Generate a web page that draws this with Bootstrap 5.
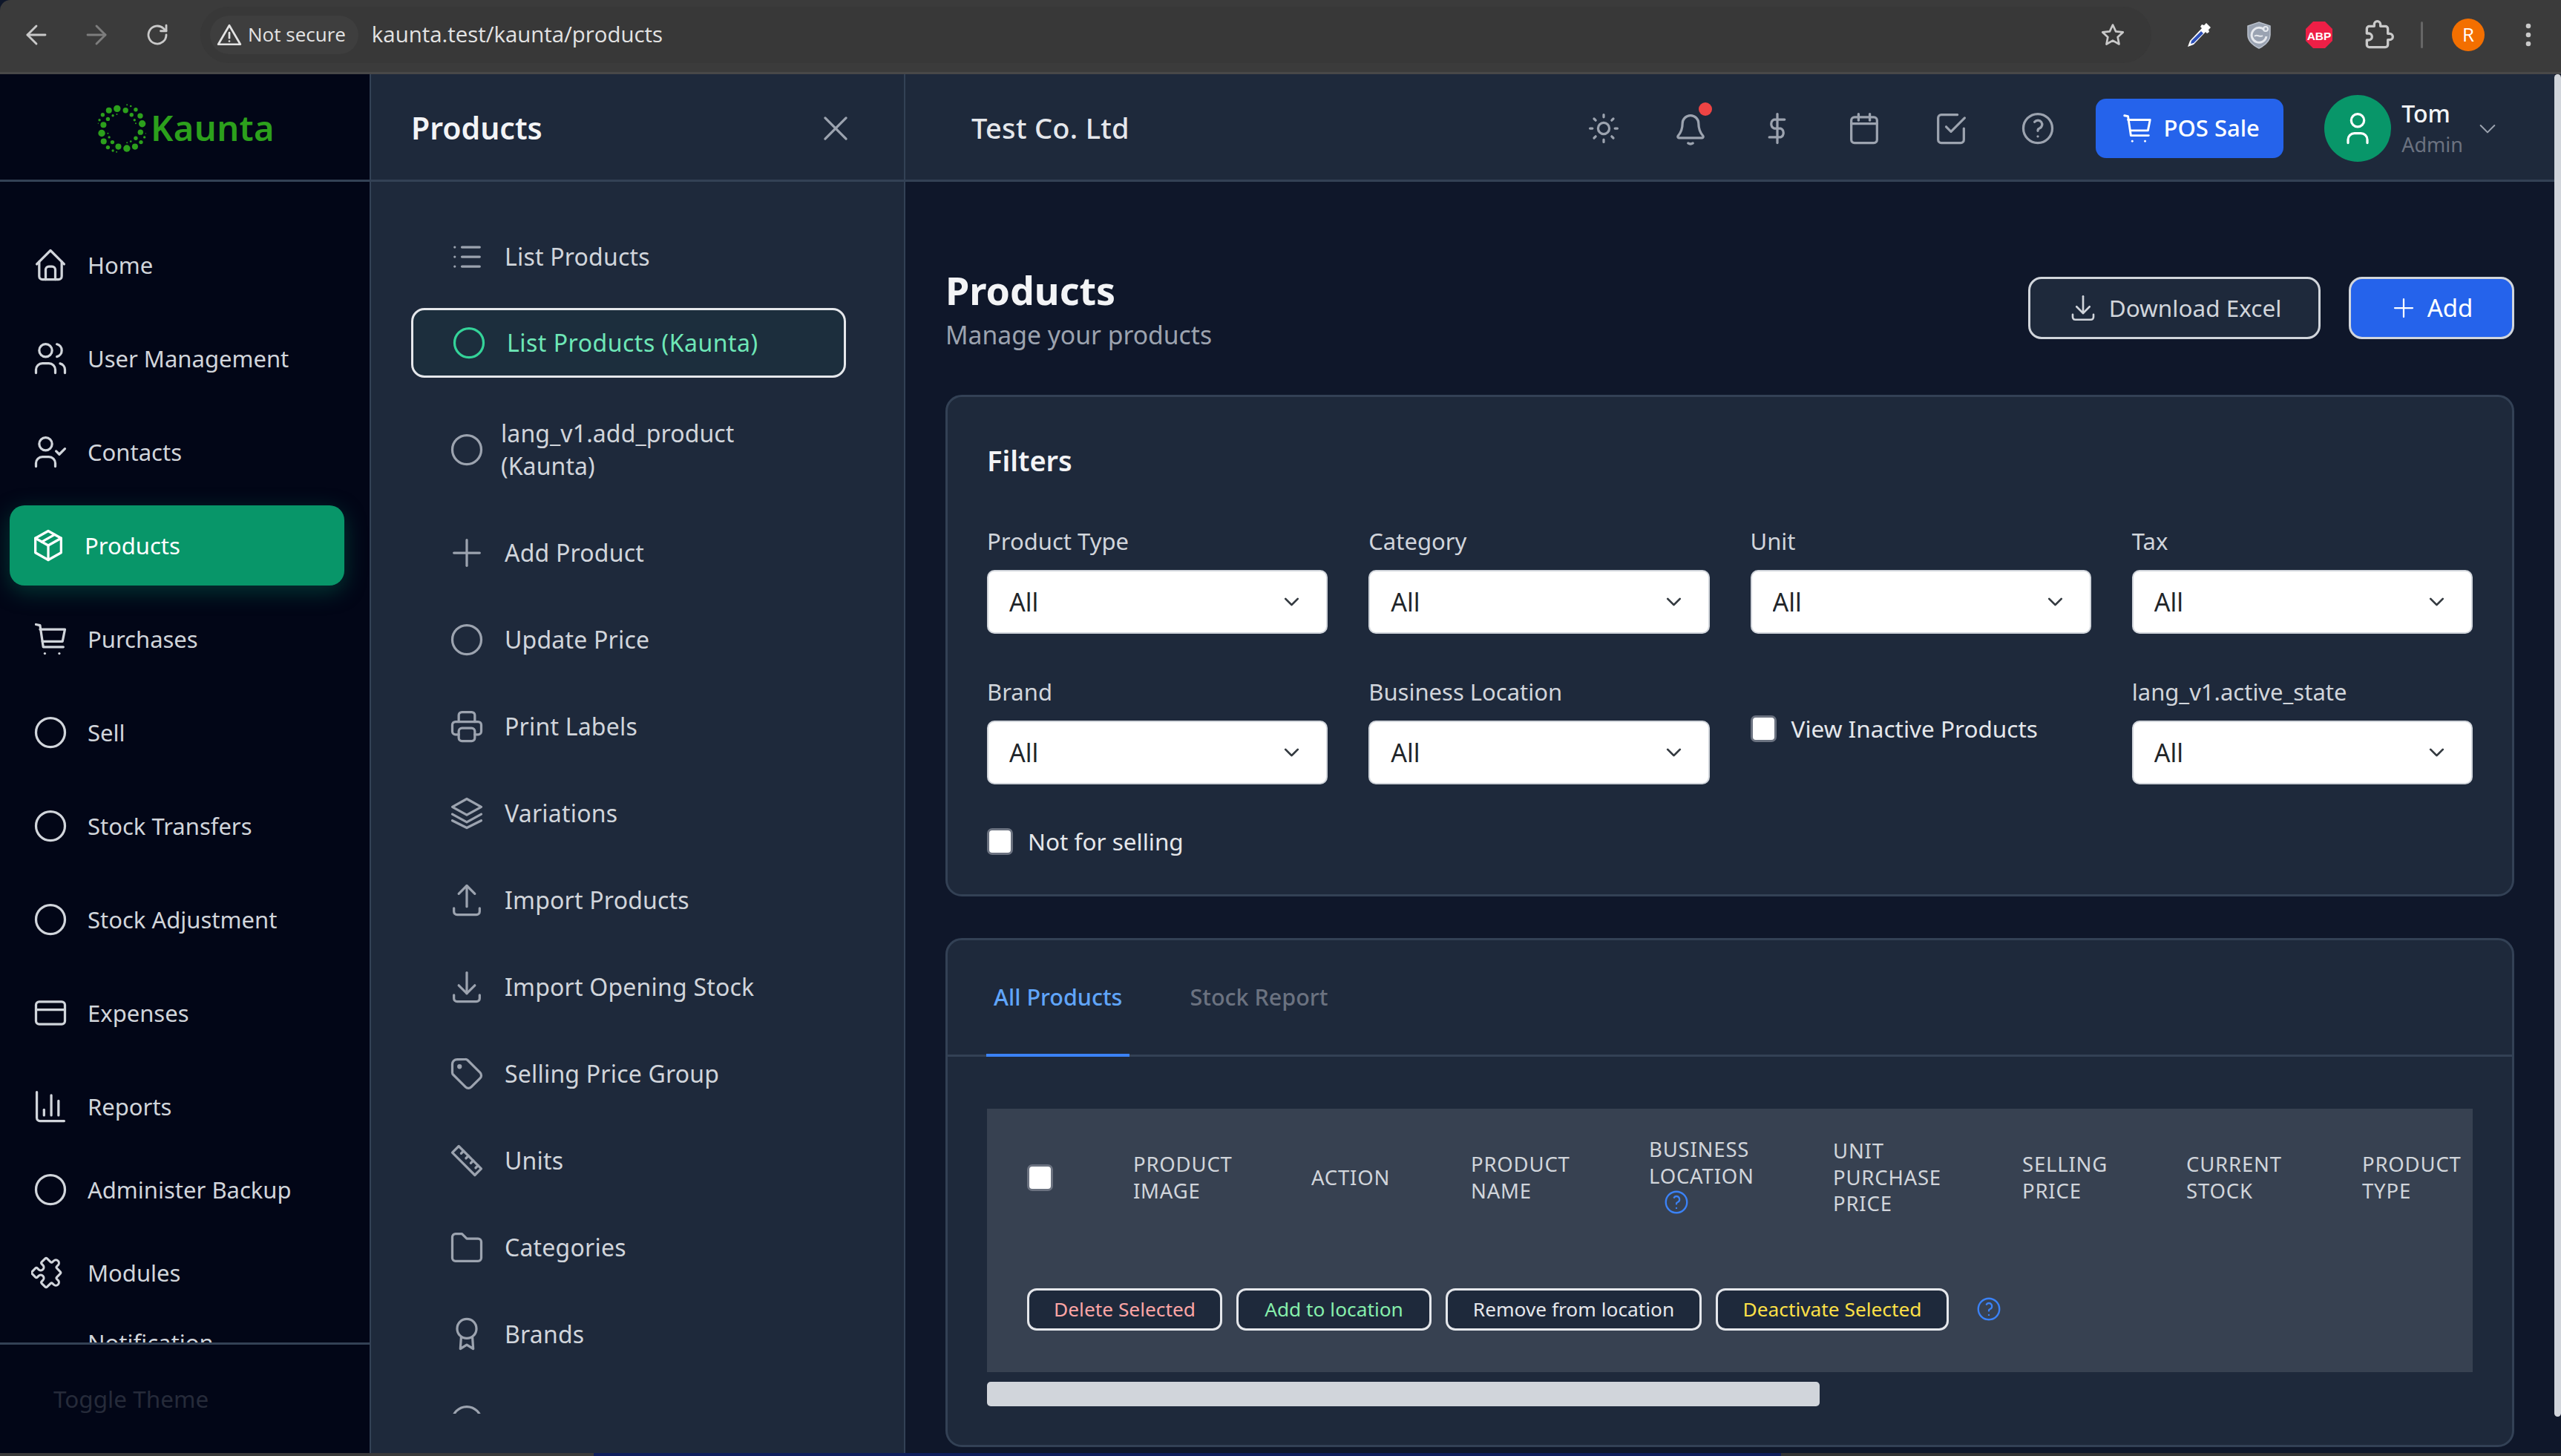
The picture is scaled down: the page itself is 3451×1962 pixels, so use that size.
<!doctype html>
<html lang="en">
<head>
<meta charset="utf-8">
<title>Products - Kaunta</title>
<link href="https://cdn.jsdelivr.net/npm/bootstrap@5.3.0/dist/css/bootstrap.min.css" rel="stylesheet">
<style>
html,body{height:100%;overflow:hidden}
body{background:#0f172a;font-family:"Noto Sans","Open Sans",sans-serif;font-size:32px;color:#d1d5db;display:flex;flex-direction:column}
.ico{fill:none;stroke:currentColor;stroke-width:1.5;stroke-linecap:round;stroke-linejoin:round;flex:none}
.chrome-bar{height:100px;flex:none;background:#3b3b3b;border-bottom:3px solid #484848;border-top-left-radius:14px;color:#c9c9c9;padding-bottom:4px}
.cb-back{margin-left:31px}
.cb-fwd{margin-left:45px;color:#7d7d7d}
.cb-reload{margin-left:46px}
.chrome-bar .ico{stroke-width:1.9}
.omni{width:2629px;height:76px;margin-left:40px;background:#383838;border-radius:38px}
.chip{height:52px;margin-left:13px;padding:0 17px 0 9px;background:#3e3e3e;border-radius:26px;font-size:26px;color:#e3e3e3;font-family:"Open Sans",sans-serif}
.omni-url{margin-left:18px;font-size:29.4px;color:#e3e3e3;font-family:"Open Sans",sans-serif}
.omni-star{margin-left:auto;margin-right:35px}
.ext{width:40px;height:40px;margin-left:41px;flex:none}
.ext-first{margin-left:44px}
.cb-sep{width:3px;height:36px;background:#666;border-radius:2px;margin-left:36px}
.cb-avatar{width:44px;height:44px;border-radius:50%;background:#f36f00;color:#fff;font-size:26px;margin-left:39px;flex:none;font-family:"Open Sans",sans-serif}
.cb-kebab{margin-left:47px;width:24px;height:36px}
.shell{flex:1;min-height:0}
.rail{width:500px;flex:none;background:#020617;border-right:2px solid #334155}
.rail-logo,.sub-head,.topbar{height:145px;flex:none;border-bottom:3px solid #334155;padding-top:3px}
.logo-mark{width:72px;height:72px;margin-right:3px}
.logo-word{font-size:47px;font-weight:600;color:#2ca01c;letter-spacing:.4px;line-height:1}
.rail-nav{padding-top:49px;flex:1;min-height:0;overflow:hidden;flex-wrap:nowrap}
.rail-link.nav-link{height:108px;margin:9px 34px 9px 13px;padding:0 0 0 29px;gap:24px;color:#d1d5db;font-size:31px;border-radius:20px;display:flex;align-items:center;flex:none}
.rail-link.compact{height:94px}
.rail-link.first-compact{margin-top:2px}
.rail-link.last-compact{margin-top:-9px}
.rail-link.nav-link.active{background:#089669;color:#fff;padding-left:26px;gap:23px;box-shadow:0 8px 30px rgba(5,150,105,.35)}
.rail-foot{height:149px;flex:none;border-top:3px solid #334155;padding-left:72px;font-size:31.500px;color:#262b3a;background:#020617}
.subnav{width:720px;flex:none;background:#1e293b;border-right:2px solid #334155}
.sub-head{padding-left:54px;padding-right:66px}
.sub-title{font-size:41px;font-weight:600;color:#f3f4f6;margin:0}
.sub-close{color:#9ca3af}
.sub-list{padding:54px 78px 0 54px;height:1660px;overflow:hidden;flex-wrap:nowrap;flex:none}
.sub-link.nav-link{height:94px;flex:none;margin-bottom:23px;padding:0 0 0 47px;gap:25px;color:#d1d5db;font-size:32px;display:flex;align-items:center;border:2px solid transparent;border-radius:18px;letter-spacing:.2px}
.sub-link .ico{color:#9ca3af}
.sub-link.nav-link.active{border:3px solid #e5e7eb;background:#1c2e3d;color:#6ee7b7;margin-bottom:23px;padding-left:49px;letter-spacing:.5px}
.sub-link.active .ico{color:#34d399}
.sub-link.first-sub{margin-bottom:22px}
.sub-link.tall.nav-link{height:148px;margin-bottom:18px;gap:20px;line-height:44px;letter-spacing:.1px}
.main-area{flex:1;min-width:0;background:#0f172a}
.topbar{background:#1e293b;padding-left:89px}
.co-name{font-size:38px;font-weight:500;color:#e5e7eb;margin:0;letter-spacing:.3px}
.top-icons{gap:65px;margin-left:auto;color:#9ca3af}
.bell-wrap{position:relative;display:block;width:52px;height:52px}
.bell-dot{position:absolute;top:-9px;right:-3px;width:18px;height:18px;background:#ef4444;border-radius:50%}
.pos-btn.btn{width:253px;height:80px;margin-left:52px;background:#2563eb;border:0;border-radius:14px;color:#fff;font-size:31px;font-weight:500;gap:13px}
.avatar{width:90px;height:90px;border-radius:50%;background:#089669;color:#fff;margin-left:55px;flex:none}
.who{margin-left:14px;line-height:1.2}
.who-name{font-size:32px;font-weight:500;color:#f3f4f6}
.who-role{font-size:27px;color:#6b7280;margin-top:6px}
.who-caret{margin-left:17px;margin-right:74px;color:#9ca3af}
.content{padding:0 54px 0 54px;flex:1;min-height:0;overflow:hidden}
.page-head{height:287px;padding-top:110px;flex:none}
.page-title{font-size:52px;font-weight:700;color:#f3f4f6;line-height:72px;margin:0}
.page-sub{font-size:33.700px;color:#9ca3af;line-height:48px;margin:0}
.head-btns{gap:38px;margin-top:18px}
.ghost-btn.btn{height:84px;width:394px;background:#1e293b;border:3px solid #d1d5db;border-radius:18px;color:#d1d5db;font-size:31.500px;gap:14px}
.add-btn.btn{height:84px;width:223px;background:#2563eb;border:3px solid #d1d5db;border-radius:18px;color:#fff;font-size:33px;gap:14px}
.panel.card{background:#1e293b;border:3px solid #334155;border-radius:22px;--bs-card-bg:#1e293b}
.filter-panel{padding:50px 53px 53px;margin-bottom:56px}
.filter-title{font-size:38px;font-weight:600;color:#f3f4f6;line-height:70px;margin:0 0 55px}
.filter-grid{--bs-gutter-x:55px;--bs-gutter-y:0}
.field{margin-bottom:59px}
.field .form-label{font-size:31px;line-height:38px;margin-bottom:20px;color:#d1d5db}
.field .form-select{height:86px;font-size:34px;color:#212529;padding:0 60px 0 28px;border:2px solid #d1d5db;border-radius:10px;background-size:27px 22px;background-position:right 33px center}
.field-check{padding-top:51px}
.chk.form-check-input{width:35px;height:36px;margin:0;border:3px solid #6b7280;border-radius:7px;background-color:#fff;flex:none;float:none}
.chk-label{font-size:31.500px;line-height:36px;color:#e5e7eb;margin-left:20px}
.tabs-panel{height:686px}
.tab-strip.nav{height:157px;padding-left:52px;gap:71px;border-bottom:3px solid #334155;flex:none}
.tab-item.nav-link{height:157px;padding:0 10px;display:flex;align-items:center;font-size:30.500px;font-weight:500;color:#6b7280;border-bottom:4px solid transparent;border-radius:0}
.tab-item.nav-link.active{color:#60a5fa;border-bottom-color:#3b82f6}
.tbl-wrap{padding:70px 52px 0 53px}
.prod-table.table{--bs-table-bg:#374151;--bs-table-color:#d1d5db;margin:0;table-layout:fixed;width:2002px;height:355px}
.prod-table th{height:185px;padding:0;border:0;vertical-align:middle;font-size:27.500px;font-weight:400;line-height:35.500px;text-transform:uppercase;letter-spacing:.8px;color:#d1d5db}
.prod-table th:nth-child(1){width:197px;padding-left:54px}
.prod-table th:nth-child(2){width:240px}
.prod-table th:nth-child(3){width:215px}
.prod-table th:nth-child(4){width:240px}
.prod-table th:nth-child(5){width:248px}
.prod-table th:nth-child(6){width:255px}
.prod-table th:nth-child(7){width:221px}
.prod-table th:nth-child(8){width:237px}
.prod-table th:nth-child(9){width:149px}
.help-ico{color:#3b82f6;display:block;margin-left:18px;margin-top:-1px;margin-bottom:3px}
.prod-table td{padding:0 0 0 54px;border:0;vertical-align:middle}
.bulk{gap:19px}
.bulk-btn.btn{height:57px;background:#1e293b;border:3px solid #e5e7eb;border-radius:13px;font-size:26.300px;padding:0;line-height:1}
.bulk-del{width:263px}.bulk-del.btn{color:#fca5a5}
.bulk-add{width:263px}.bulk-add.btn{color:#86efac}
.bulk-rem{width:345px}.bulk-rem.btn{color:#e5e7eb}
.bulk-off{width:314px}.bulk-off.btn{color:#fde047}
.bulk-help{color:#3b82f6;margin-left:16px}
.h-thumb{width:1122px;height:33px;background:#d1d5db;border-radius:5px;margin-top:13px}
.v-gutter{width:9px;flex:none;background:#0f172a}
.v-thumb{height:1809px;background:#d1d5db;border-radius:6px}
.task-strip{height:4px;flex:none;background:linear-gradient(90deg,#3a3a3a 0 800px,#0f1e5c 800px 2400px,#333 2400px 100%)}
</style>
</head>
<body>
<svg width="0" height="0" style="position:absolute" aria-hidden="true">
<defs>
<symbol id="i-home" viewBox="0 0 24 24"><path d="M3.500 11.500 12 3l8.500 8.500"/><path d="M5 10v9a2 2 0 0 0 2 2h10a2 2 0 0 0 2-2v-9"/><path d="M9 21v-6a2 2 0 0 1 2-2h2a2 2 0 0 1 2 2v6"/></symbol>
<symbol id="i-users" viewBox="0 0 24 24"><path d="M5 7a4 4 0 1 0 8 0a4 4 0 1 0-8 0"/><path d="M3 21v-2a4 4 0 0 1 4-4h4a4 4 0 0 1 4 4v2"/><path d="M16 3.130a4 4 0 0 1 0 7.750"/><path d="M21 21v-2a4 4 0 0 0-3-3.850"/></symbol>
<symbol id="i-ucheck" viewBox="0 0 24 24"><path d="M5 7a4 4 0 1 0 8 0a4 4 0 1 0-8 0"/><path d="M3 21v-2a4 4 0 0 1 4-4h4a4 4 0 0 1 4 4v2"/><path d="M15.500 11.500l2 2 3.500-3.500"/></symbol>
<symbol id="i-box" viewBox="0 0 24 24"><path d="M12 3l8 4.500v9L12 21l-8-4.500v-9z"/><path d="M12 12l8-4.500"/><path d="M12 12v9"/><path d="M12 12L4 7.500"/><path d="M16 5.250l-8 4.500"/></symbol>
<symbol id="i-cart" viewBox="0 0 24 24"><path d="M3 3l2.500.5L7.500 17H20"/><path d="M5.500 6H21l-1.500 7.500H7"/><path d="M8.500 21v.01"/><path d="M17.500 21v.01"/></symbol>
<symbol id="i-circle" viewBox="0 0 24 24"><circle cx="12" cy="12" r="9"/></symbol>
<symbol id="i-card" viewBox="0 0 24 24"><rect x="3" y="5" width="18" height="14" rx="2"/><path d="M3 10h18"/></symbol>
<symbol id="i-chart" viewBox="0 0 24 24"><path d="M3.500 3v16a2 2 0 0 0 2 2h15"/><path d="M8 17.500v-3.500"/><path d="M12.500 17.500V5"/><path d="M17 17.500V8.500"/></symbol>
<symbol id="i-puzzle" viewBox="0 0 24 24"><path transform="rotate(45 12 12) translate(.6 .6) scale(.95)" d="M4 7h3a1 1 0 0 0 1-1V5a2 2 0 0 1 4 0v1a1 1 0 0 0 1 1h3a1 1 0 0 1 1 1v3a1 1 0 0 0 1 1h1a2 2 0 0 1 0 4h-1a1 1 0 0 0-1 1v3a1 1 0 0 1-1 1h-3a1 1 0 0 1-1-1v-1a2 2 0 0 0-4 0v1a1 1 0 0 1-1 1H4a1 1 0 0 1-1-1v-3a1 1 0 0 1 1-1h1a2 2 0 0 0 0-4H4a1 1 0 0 1-1-1V8a1 1 0 0 1 1-1"/></symbol>
<symbol id="i-list" viewBox="0 0 24 24"><path d="M9 6h11"/><path d="M9 12h11"/><path d="M9 18h11"/><path d="M4.500 6v.01"/><path d="M4.500 12v.01"/><path d="M4.500 18v.01"/></symbol>
<symbol id="i-plus" viewBox="0 0 24 24"><path d="M12 4v16"/><path d="M4 12h16"/></symbol>
<symbol id="i-x" viewBox="0 0 24 24"><path d="M5.500 5.500l13 13"/><path d="M18.500 5.500l-13 13"/></symbol>
<symbol id="i-print" viewBox="0 0 24 24"><path d="M17 17h2a2 2 0 0 0 2-2v-4a2 2 0 0 0-2-2H5a2 2 0 0 0-2 2v4a2 2 0 0 0 2 2h2"/><path d="M17 9V5a2 2 0 0 0-2-2H9a2 2 0 0 0-2 2v4"/><path d="M7 15a2 2 0 0 1 2-2h6a2 2 0 0 1 2 2v4a2 2 0 0 1-2 2H9a2 2 0 0 1-2-2z"/></symbol>
<symbol id="i-stack" viewBox="0 0 24 24"><path d="M12 3L3 8l9 5 9-5z"/><path d="M3 12.500l9 5 9-5"/><path d="M3 16.500l9 4.500 9-4.500"/></symbol>
<symbol id="i-up" viewBox="0 0 24 24"><path d="M4 17v2a2 2 0 0 0 2 2h12a2 2 0 0 0 2-2v-2"/><path d="M7 8l5-5 5 5"/><path d="M12 3v13"/></symbol>
<symbol id="i-down" viewBox="0 0 24 24"><path d="M4 17v2a2 2 0 0 0 2 2h12a2 2 0 0 0 2-2v-2"/><path d="M7 11l5 5 5-5"/><path d="M12 3v13"/></symbol>
<symbol id="i-tag" viewBox="0 0 24 24"><circle cx="7.500" cy="7.500" r=".7"/><path d="M3 6v5.170a2 2 0 0 0 .590 1.410l7.710 7.710a2.410 2.410 0 0 0 3.410 0l5.590-5.590a2.410 2.410 0 0 0 0-3.410l-7.710-7.710A2 2 0 0 0 11.170 3H6a3 3 0 0 0-3 3z"/></symbol>
<symbol id="i-ruler" viewBox="0 0 24 24"><path d="M7 3l14 14-4 4L3 7z"/><path d="M10 6L8.500 7.500"/><path d="M13 9l-1.500 1.500"/><path d="M16 12l-1.500 1.500"/><path d="M19 15l-1.500 1.500"/></symbol>
<symbol id="i-folder" viewBox="0 0 24 24"><path d="M5 3.500h4l3 3h7a2 2 0 0 1 2 2V18.500a2 2 0 0 1-2 2H5a2 2 0 0 1-2-2V5.500a2 2 0 0 1 2-2"/></symbol>
<symbol id="i-award" viewBox="0 0 24 24"><circle cx="12" cy="8.500" r="6"/><path d="M8.500 13.800L8 21l4-2.500 4 2.500-.5-7.200"/></symbol>
<symbol id="i-sun" viewBox="0 0 24 24"><circle cx="12" cy="12" r="3.500"/><path d="M3.500 12H5M12 3.500V5M19 12h1.500M12 19v1.500M6 6l1 1M18 6l-1 1M17 17l1 1M7 17l-1 1"/></symbol>
<symbol id="i-bell" viewBox="0 0 24 24"><path d="M12 3.500a5 5 0 0 1 5 5c0 3 .7 5.300 2.800 7.800a.8.8 0 0 1-.6 1.200H4.800a.8.8 0 0 1-.6-1.200C6.300 13.800 7 11.500 7 8.500a5 5 0 0 1 5-5z"/><path d="M10.500 20.700c1 .7 2 .7 3 0"/></symbol>
<symbol id="i-dollar" viewBox="0 0 24 24"><path d="M16.500 6.500H10a3 3 0 0 0 0 5.500h4a3 3 0 0 1 0 5.500H7"/><path d="M12 3v18"/></symbol>
<symbol id="i-cal" viewBox="0 0 24 24"><path d="M4 7a2 2 0 0 1 2-2h12a2 2 0 0 1 2 2v12a2 2 0 0 1-2 2H6a2 2 0 0 1-2-2z"/><path d="M8.500 3v4"/><path d="M15.500 3v4"/><path d="M4 9h16"/></symbol>
<symbol id="i-check" viewBox="0 0 24 24"><path d="M9 11l3 3 8.500-8.500"/><path d="M20 12v7a2 2 0 0 1-2 2H6a2 2 0 0 1-2-2V5.500a2 2 0 0 1 2-2h10"/></symbol>
<symbol id="i-help" viewBox="0 0 24 24"><circle cx="12" cy="12" r="9"/><path d="M12 17v.01"/><path d="M12 13.500a1.500 1.500 0 0 1 1-1.500 2.600 2.600 0 1 0-3-4"/></symbol>
<symbol id="i-user" viewBox="0 0 24 24"><path d="M8 7a4 4 0 1 0 8 0a4 4 0 1 0-8 0"/><path d="M6 21v-2a4 4 0 0 1 4-4h4a4 4 0 0 1 4 4v2"/></symbol>
<symbol id="i-caret" viewBox="0 0 24 24"><path d="M5 9l7 7 7-7"/></symbol>
<symbol id="i-back" viewBox="0 0 24 24"><path d="M20 12H4"/><path d="M12 4l-8 8 8 8"/></symbol>
<symbol id="i-fwd" viewBox="0 0 24 24"><path d="M4 12h16"/><path d="M12 4l8 8-8 8"/></symbol>
<symbol id="i-reload" viewBox="0 0 24 24"><path d="M20 12a8 8 0 1 1-2.500-5.800L20 8.500"/><path d="M20 3.500v5h-5"/></symbol>
<symbol id="i-warn" viewBox="0 0 24 24"><path d="M12 3L1.500 21h21z"/><path d="M12 10v5"/><path d="M12 18v.01"/></symbol>
<symbol id="i-star" viewBox="0 0 24 24"><path d="M12 2.500l2.900 6.200 6.800.8-5 4.600 1.300 6.700-6-3.400-6 3.400 1.300-6.700-5-4.600 6.800-.8z"/></symbol>
</defs>
</svg>

<header class="chrome-bar d-flex align-items-center">
  <svg class="ico cb-back" width="36" height="36"><use href="#i-back"/></svg>
  <svg class="ico cb-fwd" width="36" height="36"><use href="#i-fwd"/></svg>
  <svg class="ico cb-reload" width="36" height="36"><use href="#i-reload"/></svg>
  <div class="omni d-flex align-items-center">
    <div class="chip d-flex align-items-center gap-2"><svg class="ico" width="34" height="34"><use href="#i-warn"/></svg>Not secure</div>
    <span class="omni-url">kaunta.test/kaunta/products</span>
    <svg class="ico omni-star" width="34" height="34"><use href="#i-star"/></svg>
  </div>
  <svg class="ext ext-first" viewBox="0 0 40 40"><path d="M25 10l5 5L13 33l-8 3 3-8z" fill="#fff"/><path d="M23 15l3 3-13 13-4 1 1-4z" fill="#2c4fb8"/><path d="M24 6l3 1 3-3 6 6-3 3 1 3-3 2-9-9z" fill="#fff"/></svg>
  <svg class="ext" viewBox="0 0 40 40"><path d="M20 3l15 5v12c0 9-7 14-15 18C12 34 5 29 5 20V8z" fill="#9aa3b2" stroke="#b9c0cb" stroke-width="1.500"/><path d="M27 13a10 10 0 1 0 3 9" fill="none" stroke="#e6e9ee" stroke-width="3"/><circle cx="29" cy="12" r="3" fill="none" stroke="#e6e9ee" stroke-width="2"/><path d="M14 22c3-4 7 2 11-1" fill="none" stroke="#e6e9ee" stroke-width="2"/></svg>
  <svg class="ext" viewBox="0 0 40 40"><path d="M12 2h16l10 10v16L28 38H12L2 28V12z" fill="#ee1f46"/><text x="20" y="26.500" text-anchor="middle" font-family="Liberation Sans, sans-serif" font-weight="700" font-size="15.500" fill="#fff">ABP</text></svg>
  <svg class="ico ext" style="color:#c9c9c9" viewBox="0 0 24 24"><path stroke-width="2" d="M20.500 11H19V7c0-1.100-.9-2-2-2h-4V3.500C13 2.120 11.880 1 10.500 1S8 2.120 8 3.500V5H4c-1.100 0-2 .9-2 2v3.800h1.500c1.490 0 2.700 1.210 2.700 2.700s-1.210 2.700-2.700 2.700H2V20c0 1.100.9 2 2 2h13c1.100 0 2-.9 2-2v-4h1.500c1.380 0 2.500-1.120 2.500-2.500S21.880 11 20.500 11z"/></svg>
  <div class="cb-sep"></div>
  <div class="cb-avatar d-flex align-items-center justify-content-center">R</div>
  <svg class="cb-kebab" viewBox="0 0 24 36"><circle cx="12" cy="6" r="3.300" fill="#c9c9c9"/><circle cx="12" cy="18" r="3.300" fill="#c9c9c9"/><circle cx="12" cy="30" r="3.300" fill="#c9c9c9"/></svg>
</header>

<div class="shell d-flex">
  <aside class="rail d-flex flex-column">
    <div class="rail-logo d-flex align-items-center justify-content-center">
      <svg class="logo-mark" viewBox="370 410 215 215" fill="#2ca01c">
        <circle cx="459" cy="438" r="14"/><circle cx="426" cy="445" r="12"/><circle cx="493" cy="445" r="11"/><circle cx="552" cy="467" r="11"/><circle cx="560" cy="499" r="14"/><circle cx="553" cy="533" r="11"/><circle cx="531" cy="591" r="12"/><circle cx="498" cy="598" r="14"/><circle cx="464" cy="591" r="12"/><circle cx="405" cy="570" r="12"/><circle cx="397" cy="537" r="14"/><circle cx="404" cy="503" r="12"/><circle cx="401" cy="463" r="8"/><circle cx="422" cy="480" r="8"/><circle cx="517" cy="463" r="8"/><circle cx="534" cy="442" r="8"/><circle cx="555" cy="573" r="8"/><circle cx="534" cy="557" r="8"/><circle cx="440" cy="573" r="8"/><circle cx="422" cy="594" r="8"/><circle cx="442" cy="466" r="5"/><circle cx="458" cy="461" r="3"/><circle cx="529" cy="484" r="5"/><circle cx="534" cy="497" r="3"/><circle cx="569" cy="553" r="5"/><circle cx="514" cy="570" r="4"/><circle cx="499" cy="575" r="3"/><circle cx="442" cy="607" r="5"/><circle cx="457" cy="612" r="3"/><circle cx="427" cy="553" r="5"/><circle cx="422" cy="538" r="3"/><circle cx="388" cy="484" r="5"/><circle cx="383" cy="497" r="2"/><circle cx="514" cy="428" r="4"/><circle cx="499" cy="423" r="3"/><circle cx="574" cy="538" r="2"/>
      </svg>
      <span class="logo-word">Kaunta</span>
    </div>
    <nav class="rail-nav nav flex-column">
      <a class="rail-link nav-link" href="#"><svg class="ico" width="52" height="52"><use href="#i-home"/></svg>Home</a>
      <a class="rail-link nav-link" href="#"><svg class="ico" width="52" height="52"><use href="#i-users"/></svg>User Management</a>
      <a class="rail-link nav-link" href="#"><svg class="ico" width="52" height="52"><use href="#i-ucheck"/></svg>Contacts</a>
      <a class="rail-link nav-link active" href="#"><svg class="ico" width="52" height="52"><use href="#i-box"/></svg>Products</a>
      <a class="rail-link nav-link" href="#"><svg class="ico" width="52" height="52"><use href="#i-cart"/></svg>Purchases</a>
      <a class="rail-link nav-link" href="#"><svg class="ico" width="52" height="52"><use href="#i-circle"/></svg>Sell</a>
      <a class="rail-link nav-link" href="#"><svg class="ico" width="52" height="52"><use href="#i-circle"/></svg>Stock Transfers</a>
      <a class="rail-link nav-link" href="#"><svg class="ico" width="52" height="52"><use href="#i-circle"/></svg>Stock Adjustment</a>
      <a class="rail-link nav-link" href="#"><svg class="ico" width="52" height="52"><use href="#i-card"/></svg>Expenses</a>
      <a class="rail-link nav-link" href="#"><svg class="ico" width="52" height="52"><use href="#i-chart"/></svg>Reports</a>
      <a class="rail-link nav-link compact first-compact" href="#"><svg class="ico" width="52" height="52"><use href="#i-circle"/></svg>Administer Backup</a>
      <a class="rail-link nav-link compact" href="#"><svg class="ico" width="52" height="52"><use href="#i-puzzle"/></svg>Modules</a>
      <a class="rail-link nav-link compact last-compact" href="#"><svg class="ico" width="52" height="52"></svg>Notification</a>
    </nav>
    <div class="rail-foot d-flex align-items-center">Toggle Theme</div>
  </aside>

  <aside class="subnav d-flex flex-column">
    <div class="sub-head d-flex align-items-center justify-content-between">
      <h2 class="sub-title">Products</h2>
      <svg class="ico sub-close" width="52" height="52"><use href="#i-x"/></svg>
    </div>
    <nav class="sub-list nav flex-column">
      <a class="sub-link first-sub nav-link" href="#"><svg class="ico" width="52" height="52"><use href="#i-list"/></svg>List Products</a>
      <a class="sub-link nav-link active" href="#"><svg class="ico" width="52" height="52"><use href="#i-circle"/></svg>List Products (Kaunta)</a>
      <a class="sub-link tall nav-link" href="#"><svg class="ico" width="52" height="52"><use href="#i-circle"/></svg><span>lang_v1.add_product<br>(Kaunta)</span></a>
      <a class="sub-link nav-link" href="#"><svg class="ico" width="52" height="52"><use href="#i-plus"/></svg>Add Product</a>
      <a class="sub-link nav-link" href="#"><svg class="ico" width="52" height="52"><use href="#i-circle"/></svg>Update Price</a>
      <a class="sub-link nav-link" href="#"><svg class="ico" width="52" height="52"><use href="#i-print"/></svg>Print Labels</a>
      <a class="sub-link nav-link" href="#"><svg class="ico" width="52" height="52"><use href="#i-stack"/></svg>Variations</a>
      <a class="sub-link nav-link" href="#"><svg class="ico" width="52" height="52"><use href="#i-up"/></svg>Import Products</a>
      <a class="sub-link nav-link" href="#"><svg class="ico" width="52" height="52"><use href="#i-down"/></svg>Import Opening Stock</a>
      <a class="sub-link nav-link" href="#"><svg class="ico" width="52" height="52"><use href="#i-tag"/></svg>Selling Price Group</a>
      <a class="sub-link nav-link" href="#"><svg class="ico" width="52" height="52"><use href="#i-ruler"/></svg>Units</a>
      <a class="sub-link nav-link" href="#"><svg class="ico" width="52" height="52"><use href="#i-folder"/></svg>Categories</a>
      <a class="sub-link nav-link" href="#"><svg class="ico" width="52" height="52"><use href="#i-award"/></svg>Brands</a>
      <a class="sub-link nav-link" href="#"><svg class="ico" width="52" height="52"><use href="#i-circle"/></svg></a>
    </nav>
  </aside>

  <main class="main-area d-flex flex-column">
    <div class="topbar d-flex align-items-center">
      <h1 class="co-name">Test Co. Ltd</h1>
      <div class="top-icons d-flex align-items-center">
        <svg class="ico" width="52" height="52"><use href="#i-sun"/></svg>
        <span class="bell-wrap"><svg class="ico" width="52" height="52"><use href="#i-bell"/></svg><span class="bell-dot"></span></span>
        <svg class="ico" width="52" height="52"><use href="#i-dollar"/></svg>
        <svg class="ico" width="52" height="52"><use href="#i-cal"/></svg>
        <svg class="ico" width="52" height="52"><use href="#i-check"/></svg>
        <svg class="ico" width="52" height="52"><use href="#i-help"/></svg>
      </div>
      <a class="pos-btn btn d-flex align-items-center justify-content-center" href="#"><svg class="ico" width="46" height="46"><use href="#i-cart"/></svg>POS Sale</a>
      <div class="avatar d-flex align-items-center justify-content-center"><svg class="ico" width="52" height="52"><use href="#i-user"/></svg></div>
      <div class="who">
        <div class="who-name">Tom</div>
        <div class="who-role">Admin</div>
      </div>
      <svg class="ico who-caret" width="32" height="32"><use href="#i-caret"/></svg>
    </div>
    <div class="content d-flex flex-column">
      <div class="page-head d-flex justify-content-between">
        <div>
          <h2 class="page-title">Products</h2>
          <p class="page-sub">Manage your products</p>
        </div>
        <div class="head-btns d-flex align-items-start">
          <a class="ghost-btn btn d-flex align-items-center justify-content-center" href="#"><svg class="ico" width="42" height="42"><use href="#i-down"/></svg>Download Excel</a>
          <a class="add-btn btn d-flex align-items-center justify-content-center" href="#"><svg class="ico" width="36" height="36"><use href="#i-plus"/></svg>Add</a>
        </div>
      </div>

      <section class="panel card filter-panel">
        <h3 class="filter-title">Filters</h3>
        <div class="row filter-grid">
          <div class="col-3 field"><label class="form-label d-block">Product Type</label><select class="form-select"><option>All</option></select></div>
          <div class="col-3 field"><label class="form-label d-block">Category</label><select class="form-select"><option>All</option></select></div>
          <div class="col-3 field"><label class="form-label d-block">Unit</label><select class="form-select"><option>All</option></select></div>
          <div class="col-3 field"><label class="form-label d-block">Tax</label><select class="form-select"><option>All</option></select></div>
          <div class="col-3 field"><label class="form-label d-block">Brand</label><select class="form-select"><option>All</option></select></div>
          <div class="col-3 field"><label class="form-label d-block">Business Location</label><select class="form-select"><option>All</option></select></div>
          <div class="col-3 field field-check d-flex align-items-start"><input class="chk form-check-input" type="checkbox"><span class="chk-label">View Inactive Products</span></div>
          <div class="col-3 field"><label class="form-label d-block">lang_v1.active_state</label><select class="form-select"><option>All</option></select></div>
          <div class="col-12 d-flex align-items-center"><input class="chk form-check-input" type="checkbox"><span class="chk-label">Not for selling</span></div>
        </div>
      </section>

      <section class="panel card tabs-panel">
        <ul class="tab-strip nav">
          <li class="nav-item"><a class="tab-item nav-link active" href="#">All Products</a></li>
          <li class="nav-item"><a class="tab-item nav-link" href="#">Stock Report</a></li>
        </ul>
        <div class="tbl-wrap">
          <table class="prod-table table">
            <thead>
              <tr>
                <th><input class="chk form-check-input d-block" type="checkbox" aria-label="Select all"></th>
                <th>Product<br>Image</th>
                <th>Action</th>
                <th>Product<br>Name</th>
                <th>Business<br>Location<svg class="ico help-ico" width="38" height="38"><use href="#i-help"/></svg></th>
                <th>Unit<br>Purchase<br>Price</th>
                <th>Selling<br>Price</th>
                <th>Current<br>Stock</th>
                <th>Product<br>Type</th>
              </tr>
            </thead>
            <tbody>
              <tr>
                <td colspan="9">
                  <div class="bulk d-flex align-items-center">
                    <button class="bulk-btn bulk-del btn" type="button">Delete Selected</button>
                    <button class="bulk-btn bulk-add btn" type="button">Add to location</button>
                    <button class="bulk-btn bulk-rem btn" type="button">Remove from location</button>
                    <button class="bulk-btn bulk-off btn" type="button">Deactivate Selected</button>
                    <svg class="ico bulk-help" width="38" height="38"><use href="#i-help"/></svg>
                  </div>
                </td>
              </tr>
            </tbody>
          </table>
          <div class="h-thumb"></div>
        </div>
      </section>
    </div>
  </main>
  <div class="v-gutter"><div class="v-thumb"></div></div>
</div>
<div class="task-strip"></div>
</body>
</html>
